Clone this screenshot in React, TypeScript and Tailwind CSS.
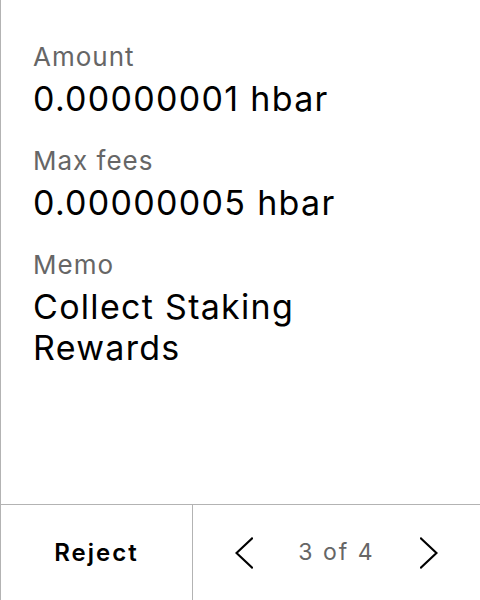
import React from 'react';

const fields = [
  { label: 'Amount', value: '0.00000001 hbar' },
  { label: 'Max fees', value: '0.00000005 hbar' },
  { label: 'Memo', value: 'Collect Staking Rewards' },
];

function Chevron({ dir }: { dir: 'left' | 'right' }) {
  return (
    <svg width="18" height="32" viewBox="0 0 18 32" fill="none" className="text-black">
      <path
        d={dir === 'left' ? 'M17 1.5 L1.5 16 L17 30.5' : 'M1 1.5 L16.5 16 L1 30.5'}
        stroke="currentColor"
        strokeWidth="2.2"
        strokeLinecap="square"
      />
    </svg>
  );
}

export default function App() {
  return (
    <div className="w-[480px] h-[600px] bg-white border-l border-[#b3b3b3] flex flex-col font-['Inter',sans-serif]">
      <div className="flex-1 pl-[32px] pr-4 pt-[41px]">
        {fields.map(f => (
          <div key={f.label} className="mb-[26px]">
            <p className="text-[26px] leading-[32px] tracking-[1px] text-[#666] mb-[5px]">{f.label}</p>
            <p className="text-[34px] leading-[41px] tracking-[1.3px] text-black max-w-[330px]">{f.value}</p>
          </div>
        ))}
      </div>
      <div className="h-[96px] border-t border-[#b3b3b3] flex">
        <button className="w-[192px] border-r border-[#b3b3b3] flex items-center justify-center text-[24px] font-semibold tracking-[2px] text-black">
          Reject
        </button>
        <div className="flex-1 flex items-center justify-between px-[42px]">
          <Chevron dir="left" />
          <span className="text-[23px] tracking-[2px] text-[#666]">3 of 4</span>
          <Chevron dir="right" />
        </div>
      </div>
    </div>
  );
}
